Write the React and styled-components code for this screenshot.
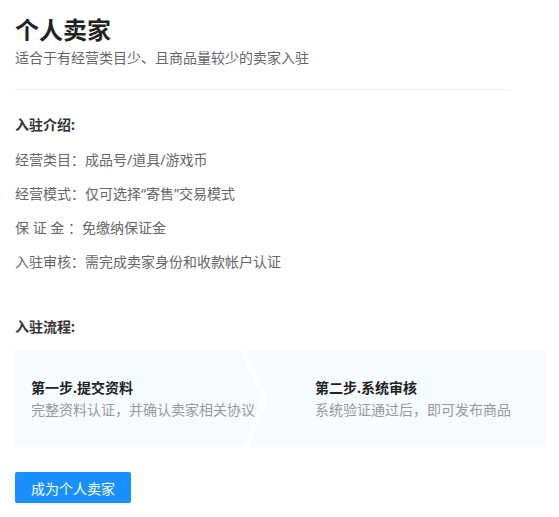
import React from 'react';
import styled, { createGlobalStyle } from 'styled-components';

const GlobalStyle = createGlobalStyle`
  body {
    margin: 0;
    background: #fff;
    font-family: "Noto Sans", "Noto Sans CJK SC", sans-serif;
  }
`;

const intro = [
  { label: '经营类目：', value: '成品号/道具/游戏币' },
  { label: '经营模式：', value: '仅可选择“寄售”交易模式' },
  { label: '保 证 金 ：', value: '免缴纳保证金' },
  { label: '入驻审核：', value: '需完成卖家身份和收款帐户认证' },
];

const steps = [
  { title: '第一步.提交资料', desc: '完整资料认证，并确认卖家相关协议' },
  { title: '第二步.系统审核', desc: '系统验证通过后，即可发布商品' },
];

const App = () => {
  return (
    <>
      <GlobalStyle />
      <Page>
        <Title>个人卖家</Title>
        <Subtitle>适合于有经营类目少、且商品量较少的卖家入驻</Subtitle>
        <Divider />

        <SectionTitle>入驻介绍:</SectionTitle>
        {intro.map(item => (
          <InfoRow key={item.label}>
            {item.label}
            {item.value}
          </InfoRow>
        ))}

        <SectionTitle spaced>入驻流程:</SectionTitle>
        <Steps>
          <Step first>
            <StepTitle>{steps[0].title}</StepTitle>
            <StepDesc>{steps[0].desc}</StepDesc>
          </Step>
          <Arrow viewBox="0 0 27 97" preserveAspectRatio="none">
            <polyline
              points="2,-2 25,49 5,99"
              fill="none"
              stroke="#fff"
              strokeWidth="5"
            />
          </Arrow>
          <Step>
            <StepTitle>{steps[1].title}</StepTitle>
            <StepDesc>{steps[1].desc}</StepDesc>
          </Step>
        </Steps>

        <PrimaryButton>成为个人卖家</PrimaryButton>
      </Page>
    </>
  );
};

const Page = styled.div`
  padding: 14px 0 20px 15px;
`;

const Title = styled.h1`
  margin: 0;
  font-size: 24px;
  line-height: 32px;
  font-weight: 700;
  color: #222;
`;

const Subtitle = styled.p`
  margin: 2px 0 0;
  font-size: 14px;
  line-height: 20px;
  color: #666;
`;

const Divider = styled.div`
  width: 496px;
  height: 1px;
  background: #eeeeee;
  margin-top: 21px;
`;

const SectionTitle = styled.h3`
  margin: ${props => (props.spaced ? '38px 0 13px' : '25px 0 8px')};
  font-size: 14px;
  line-height: 20px;
  font-weight: 700;
  color: #333;
`;

const InfoRow = styled.div`
  font-size: 14px;
  line-height: 34px;
  color: #666;
  white-space: pre;
`;

const Steps = styled.div`
  display: flex;
  width: 532px;
  height: 97px;
  background: #f6fbff;
`;

const Step = styled.div`
  box-sizing: border-box;
  width: ${props => (props.first ? '225px' : 'auto')};
  flex: ${props => (props.first ? 'none' : '1')};
  padding: 28px 0 0 ${props => (props.first ? '16px' : '48px')};
`;

const Arrow = styled.svg`
  display: block;
  flex: none;
  width: 27px;
  height: 97px;
`;

const StepTitle = styled.div`
  font-size: 14px;
  line-height: 20px;
  font-weight: 700;
  color: #222;
  white-space: nowrap;
`;

const StepDesc = styled.div`
  margin-top: 2px;
  font-size: 14px;
  line-height: 20px;
  color: #999;
  white-space: nowrap;
`;

const PrimaryButton = styled.button`
  display: block;
  margin-top: 25px;
  width: 116px;
  height: 31px;
  padding: 0;
  border: none;
  border-radius: 2px;
  background: #1890ff;
  color: #fff;
  font-family: inherit;
  font-size: 14px;
  box-shadow: 0 2px 0 rgba(0, 0, 0, 0.045);
  cursor: pointer;
`;

export default App;
